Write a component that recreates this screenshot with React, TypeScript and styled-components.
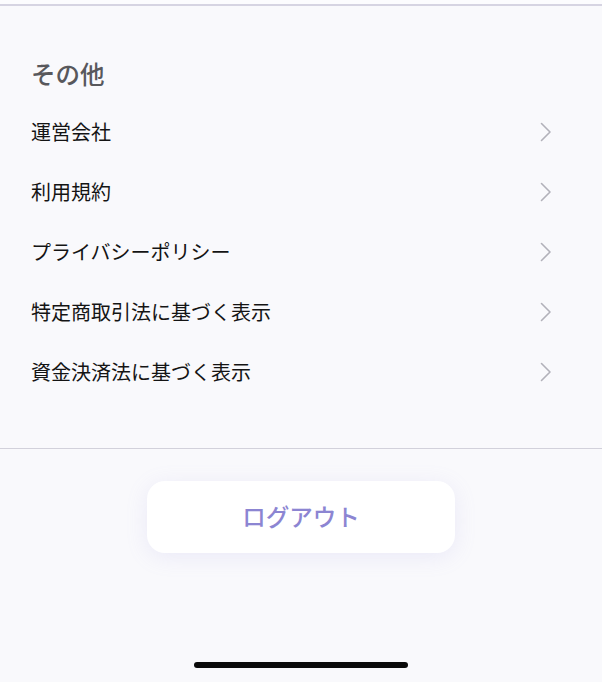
import styled, { createGlobalStyle } from "styled-components";

const GlobalStyle = createGlobalStyle`
  html, body {
    margin: 0;
    padding: 0;
    background: #f9f9fc;
  }
  body {
    font-family: "Noto Sans CJK JP", "Noto Sans", sans-serif;
  }
`;

const StyledPage = styled.div`
  width: 602px;
  height: 682px;
  display: flex;
  flex-direction: column;
  background: #f9f9fc;
  overflow: hidden;
`;

const StyledTopEdge = styled.div`
  height: 4px;
  background: #fcfcfe;
  border-bottom: 2px solid #d6d4e2;
`;

const StyledSection = styled.section`
  display: flex;
  flex-direction: column;
  padding-top: 52px;
  padding-bottom: 46px;
  border-bottom: 1px solid #d2d1db;
`;

const StyledHeading = styled.h2`
  margin: 0 0 12px;
  padding-left: 31px;
  font-size: 24.5px;
  line-height: 32px;
  font-weight: 500;
  color: #58585c;
`;

const StyledRow = styled.div`
  display: flex;
  align-items: center;
  justify-content: space-between;
  height: 60px;
  padding: 0 49px 0 31px;
`;

const StyledLabel = styled.span`
  font-size: 20px;
  line-height: 1;
  color: #141414;
`;

const StyledFooter = styled.div`
  flex: 1;
  display: flex;
  flex-direction: column;
  align-items: center;
  padding-top: 32px;
`;

const StyledButton = styled.button`
  width: 308px;
  height: 72px;
  border: none;
  border-radius: 18px;
  background: #ffffff;
  box-shadow: 0 4px 22px rgba(150, 140, 220, 0.14);
  font-family: inherit;
  font-size: 23.5px;
  font-weight: 500;
  color: #8c85d2;
  padding: 0 0 2px;
`;

const StyledHomeBar = styled.div`
  width: 214px;
  height: 6px;
  border-radius: 3px;
  background: #0a0a0a;
  margin-top: auto;
  margin-bottom: 14px;
`;

const items = [
  "運営会社",
  "利用規約",
  "プライバシーポリシー",
  "特定商取引法に基づく表示",
  "資金決済法に基づく表示",
];

function Chevron() {
  return (
    <svg width="14" height="20" viewBox="0 0 14 20" fill="none">
      <path
        d="M2.5 1.5 L11 10 L2.5 18.5"
        stroke="#b2b1ba"
        strokeWidth="1.6"
        strokeLinecap="round"
        strokeLinejoin="round"
      />
    </svg>
  );
}

function App() {
  return (
    <StyledPage>
      <GlobalStyle />
      <StyledTopEdge />
      <StyledSection>
        <StyledHeading>その他</StyledHeading>
        {items.map((label) => (
          <StyledRow key={label}>
            <StyledLabel>{label}</StyledLabel>
            <Chevron />
          </StyledRow>
        ))}
      </StyledSection>
      <StyledFooter>
        <StyledButton>ログアウト</StyledButton>
        <StyledHomeBar />
      </StyledFooter>
    </StyledPage>
  );
}

export default App;
